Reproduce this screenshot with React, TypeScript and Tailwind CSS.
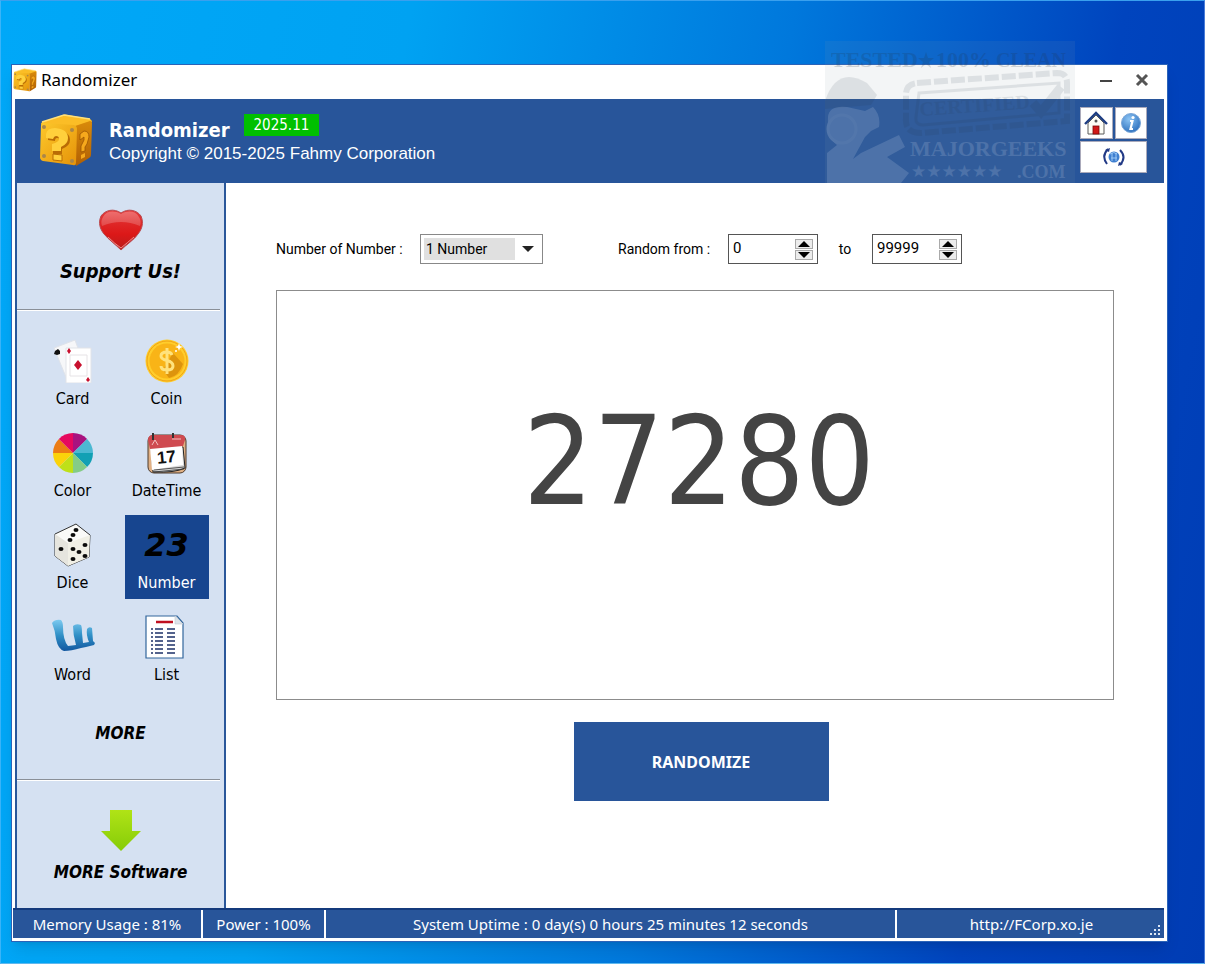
import { useState } from "react";

function BlockIcon({ className }: { className: string }) {
  return (
    <svg viewBox="0 0 54 54" className={className} aria-hidden="true">
      <defs>
        <linearGradient id="blockFront" x1="0" y1="0" x2="1" y2="1">
          <stop offset="0" stopColor="#fdc92c" />
          <stop offset="1" stopColor="#e59208" />
        </linearGradient>
        <linearGradient id="blockSide" x1="0" y1="0" x2="0" y2="1">
          <stop offset="0" stopColor="#d98a0a" />
          <stop offset="1" stopColor="#b05f04" />
        </linearGradient>
      </defs>
      <path d="M3 9 L24 2 Q26 1 29 2 L51 6 Q53 7 53 9 L37 14 L2 11Z" fill="#fbbd26" />
      <path d="M3 9 L25 2 L51 6" fill="none" stroke="#ffe07a" strokeWidth="1.5" />
      <path d="M36 13 L51 8 Q53 8 53 10 L52 42 Q52 44 50 45 L37 53Z" fill="url(#blockSide)" />
      <path d="M2 12 Q2 9 5 10 L35 12 Q38 13 38 16 L37 50 Q37 53 34 52 L4 48 Q1 47 1 44Z" fill="url(#blockFront)" />
      <path d="M9 23 Q9 17 17 17 Q31 18 31 27 Q31 33 23 36 V41 H14 V33 Q22 31 22 28 Q22 25 18 25 Q16 25 16 28 L9 27Z" fill="#b96c05" />
      <path d="M7 21 Q8 15 16 15 Q29 16 29 25 Q29 31 22 34 V38 H13 V31 Q20 29 20 26 Q20 23 17 23 Q15 23 14 26 L7 25Z" fill="#ffd03c" />
      <path d="M14 41 L23 42 V48 L14 47Z" fill="#ffd03c" stroke="#b96c05" />
      <path d="M41 21 L45 18 Q50 18 50 24 L48 31 L46 34 V38 L42 39 V33 L45 27 V24 L41 27Z" fill="#f6a81c" stroke="#9b5404" strokeWidth="0.8" />
      <path d="M42 42 L46 40 V44 L42 46Z" fill="#f6a81c" />
      <circle cx="5" cy="14" r="2" fill="#a9864a" />
      <circle cx="33" cy="17" r="2" fill="#a9864a" />
      <circle cx="5" cy="43" r="2" fill="#a9864a" />
      <circle cx="33" cy="48" r="2" fill="#a9864a" />
    </svg>
  );
}

function HeartIcon() {
  return (
    <svg viewBox="0 0 44 42" className="h-[42px] w-11" aria-hidden="true">
      <defs>
        <linearGradient id="heartBase" x1="0" y1="0" x2="0" y2="1">
          <stop offset="0" stopColor="#e23a3a" />
          <stop offset="0.6" stopColor="#dc1818" />
          <stop offset="1" stopColor="#b81c1c" />
        </linearGradient>
        <linearGradient id="heartShine" x1="0" y1="0" x2="0" y2="1">
          <stop offset="0" stopColor="#ee6d6d" />
          <stop offset="1" stopColor="#e24a4a" />
        </linearGradient>
      </defs>
      <path d="M22 4 C15 -1 6 1 2 7 C-1 14 1 20 5 25 C10 31 16 35 22 41 C28 35 35 31 39 25 C43 20 45 14 42 7 C38 1 29 -1 22 4Z" fill="url(#heartBase)" stroke="#b94a50" strokeWidth="1" />
      <path d="M22 5 C15 1 7 2 4 8 C2 11 2 14 3 17 Q22 9 41 17 C42 14 42 11 40 8 C37 2 29 1 22 5Z" fill="url(#heartShine)" />
      <path d="M9 28 Q16 35 22 39 Q28 34 35 28" fill="none" stroke="#ef8d8d" strokeWidth="1" />
    </svg>
  );
}

function CardIcon() {
  return (
    <svg viewBox="0 0 44 44" className="size-11">
      <path d="M3 9 L24 1 L36 34 L17 43Z" fill="#f6f7f9" stroke="#dfe3ea" />
      <path d="M4 12 L7 10 L9 12 L9 15 L6 16 L3 15Z" fill="#111" />
      <path d="M15 9 H40 V44 H15Z" fill="#fff" stroke="#e1e3e8" />
      <path d="M19 16 H36 V37 H19Z" fill="none" stroke="#e6e3e6" />
      <path d="M27 21 L31 26 L27 31 L23 26Z" fill="#c8102e" />
      <path d="M18 9 L20 12 L18 15 L16 12Z" fill="#c8102e" />
      <path d="M37 38 L39 41 L37 43 L35 41Z" fill="#c8102e" />
    </svg>
  );
}

function CoinIcon() {
  return (
    <svg viewBox="0 0 44 44" className="size-11">
      <circle cx="22" cy="22" r="21.5" fill="#ffcd2b" />
      <circle cx="22" cy="22" r="20" fill="none" stroke="#f0a318" strokeWidth="1" />
      <circle cx="22" cy="22" r="17.5" fill="#f9b417" />
      <path d="M28 14 L38 25 Q34 37 24 39 L18 31Z" fill="#dd940d" />
      <path d="M27 16 Q26 13 22 13 Q16 13 16 17 Q16 20 22 21.500 Q28 23 28 27 Q28 31 22 31 Q16 31 16 27 M22 9 V35" fill="none" stroke="#ffe27d" strokeWidth="3" />
      <path d="M34 4 L35 7 L38 8 L35 9 L34 12 L33 9 L30 8 L33 7Z" fill="#fff" />
      <circle cx="31" cy="12" r="1" fill="#fff" />
    </svg>
  );
}

function ColorIcon() {
  const slices = [
    { d: "M22 22 L22 2 A20 20 0 0 1 36.100 7.900Z", fill: "#a8127f" },
    { d: "M22 22 L36.100 7.900 A20 20 0 0 1 42 22Z", fill: "#4cb8d2" },
    { d: "M22 22 L42 22 A20 20 0 0 1 36.100 36.100Z", fill: "#12a0b4" },
    { d: "M22 22 L36.100 36.100 A20 20 0 0 1 22 42Z", fill: "#84cc86" },
    { d: "M22 22 L22 42 A20 20 0 0 1 7.900 36.100Z", fill: "#bfe018" },
    { d: "M22 22 L7.900 36.100 A20 20 0 0 1 2 22Z", fill: "#fbd30a" },
    { d: "M22 22 L2 22 A20 20 0 0 1 7.900 7.900Z", fill: "#ec7d14" },
    { d: "M22 22 L7.900 7.900 A20 20 0 0 1 22 2Z", fill: "#e6085e" },
  ];
  return (
    <svg viewBox="0 0 44 44" className="size-11">
      {slices.map((slice) => (
        <path key={slice.fill} d={slice.d} fill={slice.fill} />
      ))}
    </svg>
  );
}

function DateIcon() {
  return (
    <svg viewBox="0 0 44 44" className="size-11">
      <rect x="3" y="4" width="38" height="38" rx="6" fill="#e0b084" stroke="#4d3a2c" />
      <path d="M6 16 L38 16 L40 37 Q30 42 8 41Z" fill="#d8d8d8" stroke="#222" />
      <path d="M5 17 L37 13 L38 34 Q25 36 7 39Z" fill="#fff" />
      <path d="M9 41 L39 38 M9 39 L39 36" stroke="#333" strokeWidth="0.8" />
      <path d="M3 9 Q3 4 8 4 H36 Q41 4 40 9 L38 15 L5 18Z" fill="#cf4a50" />
      <path d="M7 14 L10 9 L13 14 M27 8 H36" stroke="#f3c1c1" strokeWidth="1" fill="none" />
      <path d="M8 2 V9 M28 2 V7" stroke="#333" strokeWidth="2" />
      <text x="12" y="32" transform="rotate(-5 20 28)" fontFamily="Liberation Sans" fontWeight="700" fontSize="17" fill="#111">17</text>
    </svg>
  );
}

function DiceIcon() {
  const pips = [
    [25, 7], [22, 12], [19, 17], [10, 26], [34, 22], [22, 26], [28, 29], [22, 36], [34, 33],
  ];
  return (
    <svg viewBox="0 0 44 44" className="size-11">
      <path d="M4 11 L25 1 L39 12 L38 34 L17 43 L4 33Z" fill="#fafaf8" stroke="#333" strokeWidth="1" />
      <path d="M4 11 L17 20 L17 43 L4 33Z" fill="#e6e5de" />
      <path d="M17 20 L39 12 L38 34 L17 43Z" fill="#f1f0e6" />
      {pips.map(([x, y]) => (
        <ellipse key={`${x}-${y}`} cx={x} cy={y} rx="2.500" ry="2" fill="#0b0b0b" />
      ))}
    </svg>
  );
}

function NumberIcon() {
  return (
    <span className="flex size-11 items-center justify-center font-['DejaVu_Sans'] text-[32px] leading-8 font-bold text-black italic">
      23
    </span>
  );
}

function WordIcon() {
  return (
    <svg viewBox="0 0 44 44" className="size-11">
      <defs>
        <linearGradient id="wordInk" x1="0" y1="0" x2="0" y2="1">
          <stop offset="0" stopColor="#7ccaf0" />
          <stop offset="0.5" stopColor="#2f8fc6" />
          <stop offset="1" stopColor="#1257a0" />
        </linearGradient>
      </defs>
      <path
        d="M1 8 Q4 4 10 5 Q12 7 12 12 Q12 25 17 31 L25 30 Q22 20 22 11 Q25 8 30 10 Q31 12 31 18 L32 28 L38 27 Q35 20 36 14 Q38 11 41 13 L42 26 L44 28 L43 30 L35 32 L30 33 Q20 36 13 36 Q7 34 5 24 Q4 15 1 8Z"
        fill="url(#wordInk)"
      />
    </svg>
  );
}

function ListIcon() {
  const rows = [14, 18, 22, 26, 30, 34, 38];
  return (
    <svg viewBox="0 0 44 44" className="size-11">
      <path d="M1 1 H32 L38 8 V43 H1Z" fill="#fff" stroke="#33669c" strokeWidth="1.200" />
      <path d="M30 1 V9 H38Z" fill="#dde3ea" stroke="#c2cad2" strokeWidth="0.600" />
      <path d="M11 7 H28" stroke="#c01020" strokeWidth="2.500" />
      {rows.map((y) => (
        <path key={y} d={`M6 ${y} H8 M10 ${y} H18 M22 ${y} H30`} stroke="#1c3068" strokeWidth="1.600" />
      ))}
    </svg>
  );
}

function DownloadIcon() {
  return (
    <svg viewBox="0 0 42 43" className="h-[43px] w-[42px]" aria-hidden="true">
      <defs>
        <linearGradient id="arrowGreen" x1="0" y1="0" x2="0" y2="1">
          <stop offset="0" stopColor="#b0e316" />
          <stop offset="1" stopColor="#86cc08" />
        </linearGradient>
      </defs>
      <path d="M10 1 H32 V22 H41 L21 42 L1 22 H10Z" fill="url(#arrowGreen)" />
    </svg>
  );
}

function HomeIcon() {
  return (
    <svg viewBox="0 0 24 24" className="size-6">
      <path d="M4 12 L12 4 L20 12 V23 H4Z" fill="#fdfdf6" stroke="#5a5a5a" />
      <path d="M1 13 L12 2 L23 13" fill="none" stroke="#1c3c82" strokeWidth="2.400" />
      <rect x="9" y="15" width="6" height="8" fill="#d01818" stroke="#7c0808" strokeWidth="0.800" />
      <circle cx="12" cy="10" r="1.500" fill="#555" />
    </svg>
  );
}

function InfoIcon() {
  return (
    <svg viewBox="0 0 24 24" className="size-6">
      <defs>
        <radialGradient id="infoBlue" cx="0.4" cy="0.3" r="0.8">
          <stop offset="0" stopColor="#8cc4f4" />
          <stop offset="1" stopColor="#2468b8" />
        </radialGradient>
      </defs>
      <circle cx="12" cy="12" r="9.500" fill="url(#infoBlue)" stroke="#7aa6d8" strokeWidth="1" />
      <path d="M11 10 H13.500 L11.500 18 H14" stroke="#fff" strokeWidth="2.200" fill="none" />
      <circle cx="14" cy="6.500" r="1.600" fill="#fff" />
    </svg>
  );
}

function UpdateIcon() {
  return (
    <svg viewBox="0 0 24 20" className="h-5 w-6">
      <circle cx="12" cy="10" r="5.500" fill="#3f7fd0" />
      <path d="M8 7 Q12 4 15 7 M9 11 H15 M10 6 V14 M14 6 V14" stroke="#9cc8f4" strokeWidth="1" fill="none" />
      <path d="M6 2 Q-1 9 5 17 M18 3 Q25 10 18 18" stroke="#223a86" strokeWidth="2" fill="none" />
      <path d="M3 3 L8 1 L7 5Z M21 17 L16 19 L17 15Z" fill="#223a86" />
    </svg>
  );
}

const tools = [
  { label: "Card", Icon: CardIcon },
  { label: "Coin", Icon: CoinIcon },
  { label: "Color", Icon: ColorIcon },
  { label: "DateTime", Icon: DateIcon },
  { label: "Dice", Icon: DiceIcon },
  { label: "Number", Icon: NumberIcon },
  { label: "Word", Icon: WordIcon },
  { label: "List", Icon: ListIcon },
];

function Sidebar() {
  const [active, setActive] = useState("Number");

  return (
    <aside className="flex w-[211px] shrink-0 flex-col border-x-2 border-[#2a579a] bg-[#d5e1f2] font-['DejaVu_Sans_Condensed','DejaVu_Sans',sans-serif] text-black">
      <button className="flex flex-col items-center gap-2 pt-[26px] pb-[26px]">
        <HeartIcon />
        <span className="text-xl leading-6 font-bold italic">Support Us!</span>
      </button>
      <hr className="mr-1 border-t border-b border-t-[#8a8f98] border-b-white" />

      <nav className="grid grid-cols-[84px_84px] justify-center gap-x-2.5 gap-y-2 pt-5 pr-0.5">
        {tools.map(({ label, Icon }) => (
          <button
            key={label}
            onClick={() => setActive(label)}
            className={
              active === label
                ? "flex h-[84px] flex-col items-center gap-1 bg-[#17458f] pt-2 text-white"
                : "flex h-[84px] flex-col items-center gap-1 pt-2"
            }
          >
            <Icon />
            <span className="text-base leading-6">{label}</span>
          </button>
        ))}
      </nav>
      <button className="mt-[30px] mb-[34px] text-[17px] leading-6 font-bold italic">MORE</button>
      <hr className="mr-1 border-t border-b border-t-[#8a8f98] border-b-white" />

      <button className="flex flex-col items-center gap-2 pt-7 pb-5">
        <DownloadIcon />
        <span className="text-[17px] leading-6 font-bold italic">MORE Software</span>
      </button>
    </aside>
  );
}

function Spinner({ id, value, onChange }: { id: string; value: number; onChange: (value: number) => void }) {
  return (
    <div className="flex h-[30px] w-[90px] items-center border border-[#555] bg-white pr-1">
      <input
        id={id}
        type="text"
        inputMode="numeric"
        value={value}
        onChange={(event) => onChange(Number(event.target.value) || 0)}
        className="w-full min-w-0 flex-1 pb-0.5 pl-1 text-[15px] outline-none"
      />
      <div className="flex flex-col gap-px">
        <button aria-label="Increase" onClick={() => onChange(value + 1)} className="flex h-2.5 w-[18px] items-center justify-center border border-[#aaa] bg-[#ececec]">
          <svg viewBox="0 0 12 6" className="h-1.5 w-3">
            <path d="M6 0 L12 6 H0Z" fill="#000" />
          </svg>
        </button>
        <button aria-label="Decrease" onClick={() => onChange(value - 1)} className="flex h-2.5 w-[18px] items-center justify-center border border-[#aaa] bg-[#ececec]">
          <svg viewBox="0 0 12 6" className="h-1.5 w-3">
            <path d="M6 6 L12 0 H0Z" fill="#000" />
          </svg>
        </button>
      </div>
    </div>
  );
}

function NumberPanel() {
  const [from, setFrom] = useState(0);
  const [to, setTo] = useState(99999);
  const [result, setResult] = useState("27280");

  const randomize = () => {
    setResult(String(Math.floor(Math.random() * (to - from + 1)) + from));
  };

  return (
    <main className="flex min-w-0 flex-1 flex-col bg-white pt-[51px] pr-[50px] pb-[107px] pl-[50px]">
      <div className="flex items-center font-[Roboto,'Liberation_Sans',sans-serif] text-sm leading-5 whitespace-nowrap text-black">
        <label htmlFor="count" className="w-36">Number of Number :</label>
        <div className="relative w-[123px] border border-[#888] bg-white p-[3px]">
          <select
            id="count"
            className="block h-[22px] w-full appearance-none bg-[linear-gradient(to_right,#e0e0e0_91px,#fff_91px)] pl-0.5 outline-none"
          >
            <option>1 Number</option>
            <option>2 Numbers</option>
            <option>3 Numbers</option>
          </select>
          <svg viewBox="0 0 12 6" className="pointer-events-none absolute top-[11px] right-2 h-1.5 w-3">
            <path d="M0 0 H12 L6 6Z" fill="#222" />
          </svg>
        </div>
        <label htmlFor="from" className="ml-[75px] w-[110px]">Random from :</label>
        <Spinner id="from" value={from} onChange={setFrom} />
        <label htmlFor="to" className="w-[54px] text-center">to</label>
        <Spinner id="to" value={to} onChange={setTo} />
      </div>

      <output className="mt-[26px] flex min-h-60 flex-1 items-center justify-center border border-[#8c8c8c] pb-[68px] pl-2 font-['DejaVu_Sans_Condensed','DejaVu_Sans',sans-serif] text-[123px] leading-none text-[#444]">
        {result}
      </output>

      <button
        onClick={randomize}
        className="mt-[22px] ml-3 h-[79px] w-[255px] self-center bg-[#28559a] font-['Noto_Sans',sans-serif] text-base font-bold text-white"
      >
        RANDOMIZE
      </button>
    </main>
  );
}

function Watermark() {
  return (
    <svg viewBox="0 0 250 142" className="pointer-events-none absolute top-10 right-[129px] h-[142px] w-[250px]" aria-hidden="true">
      <rect width="250" height="142" fill="#8899aa" opacity="0.1" />
      <g fill="#234" opacity="0.18" fontFamily="Liberation Serif" fontWeight="700">
        <text x="6" y="26" fontSize="22">TESTED</text>
        <path d="M101 11 L103 17 L109 17 L104 21 L106 27 L101 23 L96 27 L98 21 L93 17 L99 17Z" />
        <text x="111" y="26" fontSize="22">100%</text>
        <text x="171" y="26" fontSize="20">CLEAN</text>
      </g>
      <g opacity="0.1">
        <path d="M92 42 L232 32 Q242 32 242 42 V80 L96 92 Q80 92 81 78 V52 Q82 43 92 42Z" fill="none" stroke="#234" strokeWidth="6" strokeDasharray="14 3" />
        <path d="M94 52 L234 42 V72 L98 84 Q90 84 91 76Z" fill="none" stroke="#234" strokeWidth="3" />
        <text x="95" y="75" fontFamily="Liberation Serif" fontWeight="700" fontSize="20" fill="#234" transform="rotate(-4 95 75)">CERTIFIED</text>
        <path d="M208 62 L216 71 L236 46" fill="none" stroke="#234" strokeWidth="9" />
        <path d="M0 60 Q12 24 42 42 L52 54 L46 64 L0 68Z" fill="#234" />
      </g>
      <g fill="#dce6f4" opacity="0.16">
        <path d="M3 76 Q4 64 22 66 L40 70 L48 66 Q56 74 54 86 L46 90 L40 96 L28 118 L36 112 L74 94 L80 106 L62 116 L84 132 L76 142 H2 V112 L12 104 Q2 98 3 76Z" />
        <circle cx="17" cy="88" r="14" fill="none" stroke="#fff" strokeWidth="3" />
        <text x="85" y="115" fontFamily="Liberation Serif" fontWeight="700" fontSize="22">MAJORGEEKS</text>
        <text x="86" y="136" fontFamily="DejaVu Sans" fontSize="17">★★★★★★</text>
        <text x="192" y="137" fontFamily="Liberation Serif" fontWeight="700" fontSize="18">.COM</text>
      </g>
    </svg>
  );
}

function StatusBar() {
  return (
    <footer className="-ml-0.5 flex h-[30px] shrink-0 border-t-2 border-[#143a7c] bg-[#28559a] font-['Noto_Sans',sans-serif] text-[15px] leading-7 whitespace-nowrap text-white">
      <div className="w-[190px] border-r-2 border-white text-center">Memory Usage : 81%</div>
      <div className="w-[123px] border-r-2 border-white text-center">Power : 100%</div>
      <div className="min-w-0 flex-1 border-r-2 border-white text-center">System Uptime : 0 day(s) 0 hours 25 minutes 12 seconds</div>
      <div className="flex w-[267px] items-end justify-end">
        <a href="http://FCorp.xo.je" className="flex-1 pl-4 text-center">http://FCorp.xo.je</a>
        <svg viewBox="0 0 12 12" className="mr-0.5 mb-0.5 size-3" aria-hidden="true">
          <path d="M0 9h2v2H0z M4 9h2v2H4z M8 9h2v2H8z M4 5h2v2H4z M8 5h2v2H8z M8 1h2v2H8z" fill="#dce6f4" />
        </svg>
      </div>
    </footer>
  );
}

export default function App() {
  return (
    <div className="relative flex min-h-screen flex-col border border-t-[#3aa0ee] border-r-[#4a7cd8] border-b-[#5fb8ee] border-l-[#3ab4f8] bg-[linear-gradient(100deg,#00a8f8_0%,#00a2f2_30%,#0078dc_58%,#0044be_82%,#003cb4_100%)] pt-[63px] pr-9 pb-[21px] pl-2.5">
      <div className="flex flex-1 flex-col border border-[#2a63b8] bg-white pr-[3px] pb-[3px] pl-[3px] shadow-lg">
        <header className="flex h-[34px] items-center gap-1 pb-1">
          <BlockIcon className="-ml-0.5 size-6" />
          <h1 className="flex-1 font-['Noto_Sans',sans-serif] text-[17px] leading-6 text-black">Randomizer</h1>
          <button aria-label="Minimize" className="flex size-8 items-center justify-center">
            <svg viewBox="0 0 14 14" className="size-3.5">
              <path d="M1 8 H13" stroke="#444" strokeWidth="2" />
            </svg>
          </button>
          <button aria-label="Close" className="mr-1.5 flex size-8 items-center justify-center">
            <svg viewBox="0 0 14 14" className="size-3.5">
              <path d="M2 2 L12 12 M12 2 L2 12" stroke="#555" strokeWidth="3" />
            </svg>
          </button>
        </header>

        <section className="flex h-[84px] shrink-0 items-center bg-[#28559a] pr-[17px] pb-0.5 pl-6 text-white">
          <BlockIcon className="size-[54px]" />
          <div className="ml-4 flex flex-1 flex-col">
            <div className="flex items-start gap-3.5">
              <h2 className="pt-1 font-['DejaVu_Sans_Condensed','DejaVu_Sans',sans-serif] text-xl leading-6 font-bold">Randomizer</h2>
              <span className="bg-[#00c000] px-2.5 font-['DejaVu_Sans_Condensed','DejaVu_Sans',sans-serif] text-[15px] leading-[22px]">2025.11</span>
            </div>
            <p className="font-['Liberation_Sans',sans-serif] text-[17px] leading-6">Copyright © 2015-2025 Fahmy Corporation</p>
          </div>
          <div className="grid w-[67px] grid-cols-2 gap-0.5">
            <button aria-label="Home" className="flex h-8 items-center justify-center border border-[#aab] bg-white">
              <HomeIcon />
            </button>
            <button aria-label="About" className="flex h-8 items-center justify-center border border-[#aab] bg-white">
              <InfoIcon />
            </button>
            <button aria-label="Check for updates" className="col-span-2 flex h-8 items-center justify-center border border-[#aab] bg-white">
              <UpdateIcon />
            </button>
          </div>
        </section>

        <div className="flex flex-1">
          <Sidebar />
          <NumberPanel />
        </div>
        <StatusBar />
      </div>
      <Watermark />
    </div>
  );
}
